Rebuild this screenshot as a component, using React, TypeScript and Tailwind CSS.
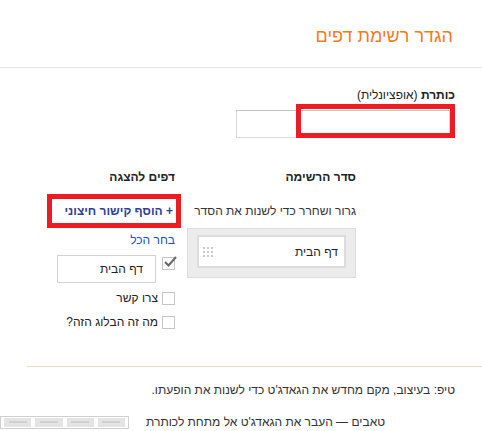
function Box({ checked = false }: { checked?: boolean }) {
  return (
    <span className="relative flex h-[13px] w-[13px] shrink-0 items-center justify-center border border-[#c6c6c6] bg-white">
      {checked && (
        <svg
          className="absolute -top-[3px] left-0"
          width="15"
          height="13"
          viewBox="0 0 15 13"
        >
          <path d="M2 7 L5.5 10.5 L13 2" fill="none" stroke="#666" strokeWidth="2" />
        </svg>
      )}
    </span>
  );
}

function DragDots() {
  return (
    <div className="grid grid-cols-3 gap-[2px]">
      {[...Array(9)].map((_, i) => (
        <span key={i} className="h-[2px] w-[2px] bg-[#c8c8c8]" />
      ))}
    </div>
  );
}

export default function App() {
  return (
    <div
      dir="rtl"
      className="relative h-[431px] w-[482px] overflow-hidden bg-white text-[12px] text-[#222]"
      style={{ fontFamily: '"Liberation Sans", Arial, sans-serif' }}
    >
      {/* header */}
      <div className="h-[68px] border-b border-[#e5e5e5] pr-[29px] pt-[25px]">
        <h1 className="text-[18px] leading-[22px] text-[#f47b20]">הגדר רשימת דפים</h1>
      </div>

      {/* title field */}
      <div className="pr-[27px] pt-[19px]">
        <div className="leading-[16px]">
          <b>כותרת</b> (אופציונלית)
        </div>
        <div className="mr-[5px] mt-[7px] h-[28px] w-[214px] border border-[#d9d9d9] border-t-[#c0c0c0] bg-white" />
      </div>

      {/* columns */}
      <div className="mt-[31px] flex gap-[12px] pr-[126px]">
        <div className="w-[169px]">
          <div className="font-bold leading-[16px]">סדר הרשימה</div>
          <div className="mt-[18px] whitespace-nowrap leading-[16px] text-[#333]">
            גרור ושחרר כדי לשנות את הסדר
          </div>
          <div className="mt-[9px] border border-[#dcdcdc] bg-[#ececec] px-[9px] pb-[9px] pt-[6px]">
            <div className="flex h-[33px] items-center justify-between border-2 border-[#dcdcdc] bg-white pl-[4px] pr-[6px]">
              <span className="text-[#222]">דף הבית</span>
              <DragDots />
            </div>
          </div>
        </div>

        <div className="w-[130px]">
          <div className="font-bold leading-[16px]">דפים להצגה</div>
          <div className="mt-[18px] pr-[2px] font-bold leading-[16px] text-[#2b3f9f]">
            + הוסף קישור חיצוני
          </div>
          <div className="mt-[13px] leading-[16px] text-[#1a4fc4]">בחר הכל</div>
          <div className="mt-[7px] flex items-start gap-[6px]">
            <div className="mt-[2px]">
              <Box checked />
            </div>
            <div className="flex h-[28px] w-[99px] items-center border border-[#d2d2d2] pr-[12px]">
              דף הבית
            </div>
          </div>
          <div className="mt-[7px] flex items-center gap-[4px] leading-[16px]">
            <Box />
            <span>צרו קשר</span>
          </div>
          <div className="mt-[8px] flex items-center gap-[4px] leading-[16px]">
            <Box />
            <span>מה זה הבלוג הזה?</span>
          </div>
        </div>
      </div>

      {/* bottom tips */}
      <div className="ml-[27px] mt-[36px] border-t border-[#e6dcc6]" />
      <div className="pr-[27px] pt-[15px] leading-[16px] text-[#333]">
        טיפ: בעיצוב, מקם מחדש את הגאדג'ט כדי לשנות את הופעתו.
      </div>
      <div className="mt-[16px] flex items-center pr-[97px]">
        <span className="whitespace-nowrap leading-[16px] text-[#333]">
          טאבים — העבר את הגאדג'ט אל מתחת לכותרת
        </span>
        <div
          dir="ltr"
          className="mr-auto flex h-[13px] w-[129px] shrink-0 items-center gap-[4px] border border-[#cfcfcf] px-[3px]"
        >
          {[0, 1, 2, 3].map((i) => (
            <div key={i} className="flex h-[9px] flex-1 items-center justify-center bg-[#e4e4e4]">
              <span className="h-[2px] w-[18px] bg-[#d0d0d0]" />
            </div>
          ))}
        </div>
      </div>

      {/* annotation boxes */}
      <div className="absolute left-[296px] top-[104px] h-[34px] w-[159px] border-[5px] border-[#ed1c24]" />
      <div className="absolute left-[47px] top-[194px] h-[34px] w-[134px] border-[5px] border-[#ed1c24]" />
    </div>
  );
}
